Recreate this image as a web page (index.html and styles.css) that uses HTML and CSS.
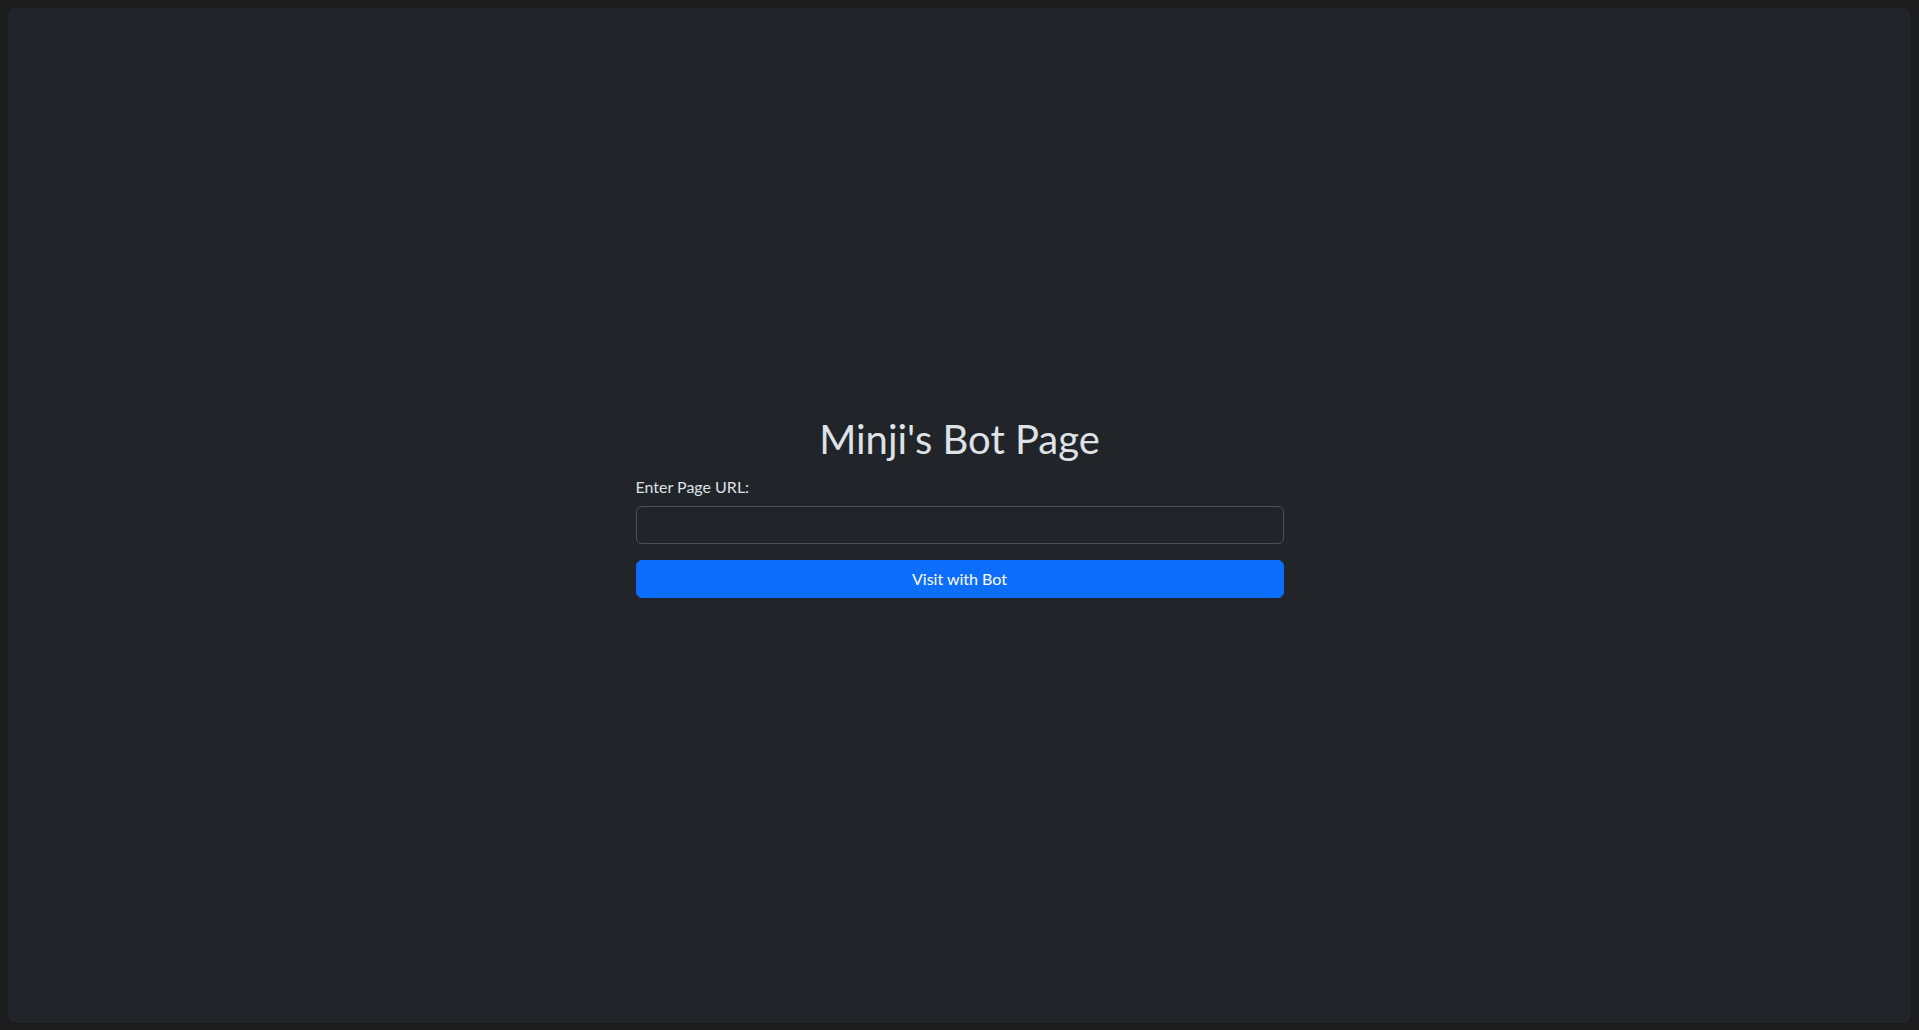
FILE: index.html
```html
<!DOCTYPE html>
<html lang="en">
<head>
<meta charset="utf-8">
<title>Minji's Bot Page</title>
<link rel="stylesheet" href="styles.css">
</head>
<body>
<div class="window">
  <main class="content">
    <h1 class="title">Minji's Bot Page</h1>
    <form class="bot-form" onsubmit="return false;">
      <label class="form-label" for="url">Enter Page URL:</label>
      <input class="form-control" type="text" id="url" name="url">
      <button class="btn-primary" type="submit">Visit with Bot</button>
    </form>
  </main>
</div>
</body>
</html>
```

FILE: styles.css
```css
* { box-sizing: border-box; }
html, body { height: 100%; }
body {
  margin: 0;
  padding: 8px 8px 7px 8px;
  background: #1c1c1d;
  font-family: "Lato", "Noto Sans", "Liberation Sans", sans-serif;
  color: #dee2e6;
}
.window {
  height: 100%;
  background: #212529;
  border-radius: 8px;
  display: flex;
  align-items: center;
  justify-content: center;
}
.content {
  width: 648px;
  padding-bottom: 21px;
}
.title {
  margin: 0 0 11px 0;
  padding-top: 3px;
  font-size: 40px;
  font-weight: 400;
  line-height: 48px;
  text-align: center;
  color: #dee2e6;
}
.bot-form {
  display: flex;
  flex-direction: column;
}
.form-label {
  font-size: 16px;
  line-height: 24px;
  padding-top: 1px;
  margin-bottom: 7px;
}
.form-control {
  height: 38px;
  background: #212529;
  border: 1px solid #495057;
  border-radius: 6px;
  color: #dee2e6;
  font: inherit;
  padding: 6px 12px;
  margin: 0 0 16px 0;
}
.btn-primary {
  height: 38px;
  background: #0d6efd;
  border: 1px solid #0d6efd;
  border-radius: 6px;
  color: #fff;
  font-family: inherit;
  font-size: 16px;
  line-height: 24px;
  padding: 6px 12px;
}
```
